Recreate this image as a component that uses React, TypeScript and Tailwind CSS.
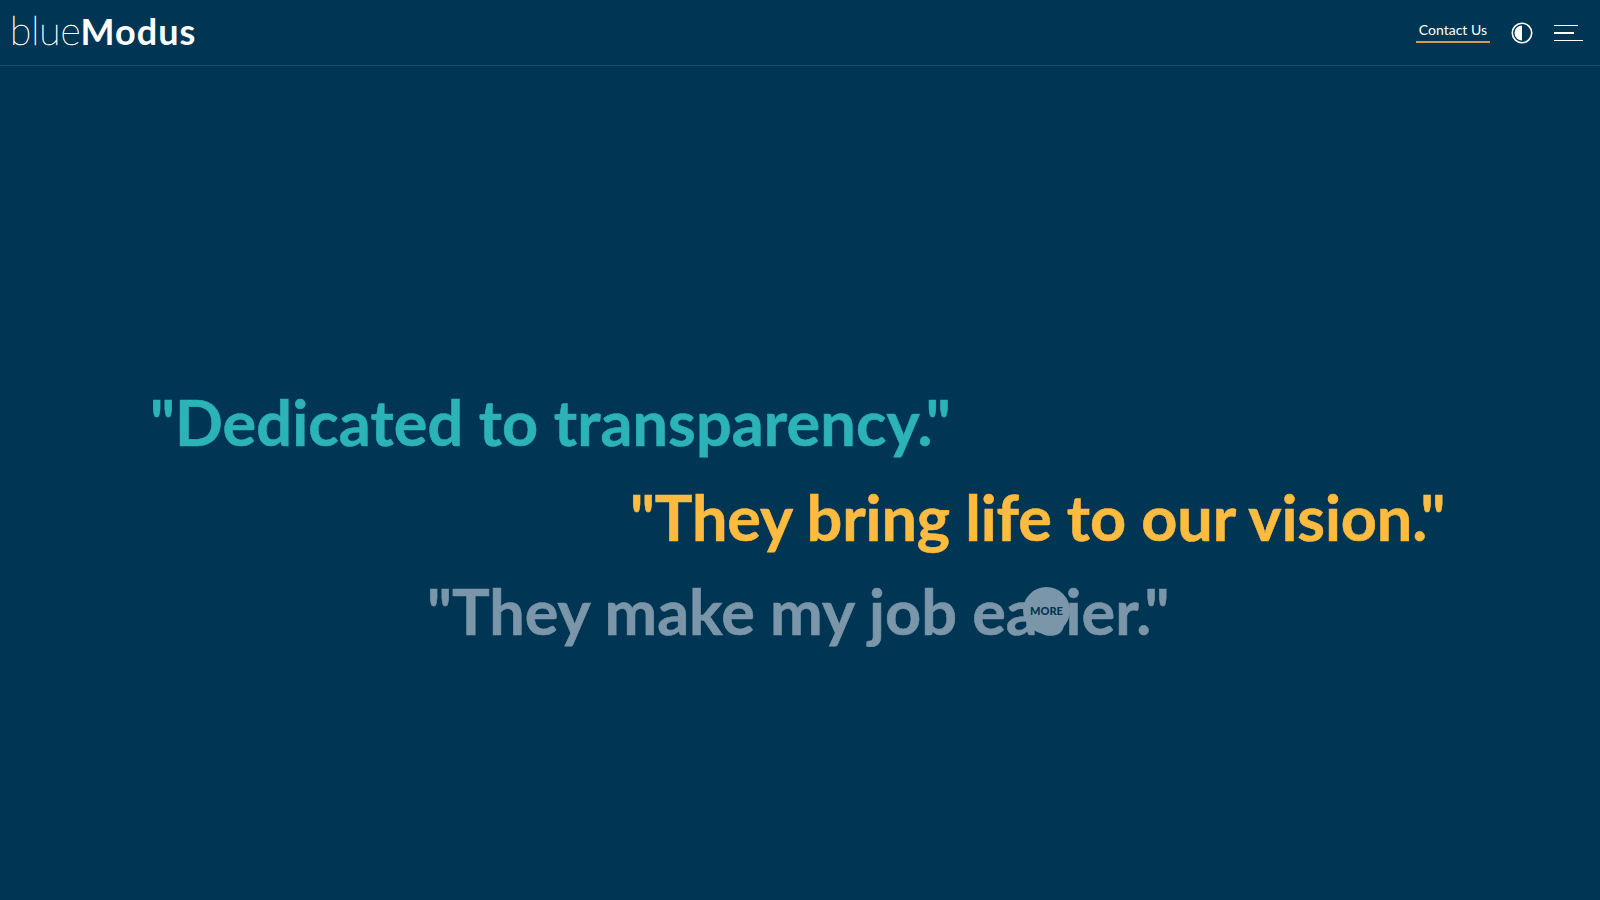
import { useState } from "react";

const quotes = [
  { text: '"Dedicated to transparency."', className: "ml-[150px] text-[#2bb3b6] tracking-[0.1px]" },
  { text: '"They bring life to our vision."', className: "ml-[630px] text-[#fdbb40] tracking-[-0.13px]" },
  { text: '"They make my job easier."', className: "ml-[427px] text-[#7b96a8]" },
];

function ContrastIcon() {
  return (
    <svg width="22" height="22" viewBox="0 0 22 22" fill="none">
      <circle cx="11" cy="11" r="9.7" stroke="white" strokeWidth="1.6" />
      <path d="M11 3.5a7.5 7.5 0 0 0 0 15z" fill="white" />
    </svg>
  );
}

export default function App() {
  const [menuOpen, setMenuOpen] = useState(false);

  return (
    <div className="flex h-[900px] flex-col overflow-hidden bg-[#003554] font-['Lato',sans-serif]">
      {/* Header */}
      <header className="flex h-[66px] shrink-0 items-center justify-between border-b border-[#1d4d6b] pl-[10px] pr-[17px]">
        <a href="#" className="mb-[4px] text-[36px] leading-none tracking-[1px] text-white">
          <span className="text-[39px] font-thin tracking-normal [-webkit-text-stroke:0.5px_white]">blue</span>
          <span className="font-bold">Modus</span>
        </a>
        <div className="flex items-center">
          <a href="#" className="mb-[2px] mr-[2px] border-b-2 border-[#c9a24d] px-[3px] pb-px text-sm text-white">
            Contact Us
          </a>
          <button className="ml-[19px]" aria-label="Toggle contrast">
            <ContrastIcon />
          </button>
          <button
            className="ml-[21px] flex w-[29px] flex-col gap-[6px]"
            aria-label="Open menu"
            onClick={() => setMenuOpen(!menuOpen)}
          >
            <span className="h-px w-6 bg-white" />
            <span className="h-0.5 w-5 bg-white" />
            <span className="h-px w-[29px] bg-white" />
          </button>
        </div>
      </header>

      {/* Quotes */}
      <main className="flex flex-1 flex-col pt-[309px]">
        {quotes.map((q) => (
          <p
            key={q.text}
            className={`${q.className} relative w-fit text-[63px] font-bold leading-[94.5px] [-webkit-text-stroke:0.6px]`}
          >
            {q.text}
            {q.text.includes("easier") && (
              <span className="absolute left-[596px] top-[23px] flex h-[47px] w-[47px] items-center justify-center rounded-full bg-[#7b96a8] text-[11px] font-black leading-none text-[#003554] [-webkit-text-stroke:0px]">
                MORE
              </span>
            )}
          </p>
        ))}
      </main>
    </div>
  );
}
